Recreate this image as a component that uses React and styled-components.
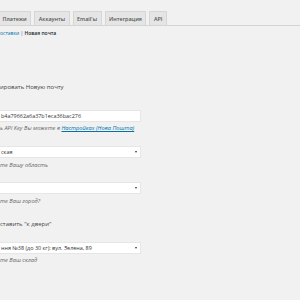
import React from "react";
import styled, { createGlobalStyle } from "styled-components";

const Global = createGlobalStyle`
  html, body { margin: 0; padding: 0; background: #f1f1f1; }
  body { font-family: "Open Sans", "Noto Sans", sans-serif; color: #444; }
`;

const Page = styled.div`
  width: 300px;
  height: 300px;
  overflow: hidden;
  padding-top: 11px;
  box-sizing: border-box;
`;

const TabBar = styled.nav`
  display: flex;
  gap: 3px;
  height: 14px;
  border-bottom: 1px solid #d4d4d4;
  margin-left: -2px;
`;

const Tab = styled.a`
  display: flex;
  align-items: center;
  height: 14px;
  box-sizing: border-box;
  padding: 0 3.5px;
  background: #e5e5e5;
  border: 1px solid #d6d6d6;
  border-bottom: none;
  font-size: 5.4px;
  font-weight: 600;
  color: #555;
  text-decoration: none;
  white-space: nowrap;
`;

const Crumbs = styled.div`
  margin-top: 3px;
  font-size: 5px;
  line-height: 8px;
  color: #555;
  white-space: nowrap;
`;

const CrumbLink = styled.a`
  color: #0073aa;
  text-decoration: none;
`;

const Current = styled.b`
  color: #23282d;
  font-weight: 600;
`;

const Label = styled.div`
  margin-top: ${p => p.$mt}px;
  font-size: 6px;
  line-height: 8px;
  color: #444;
  white-space: nowrap;
`;

const Field = styled.div`
  margin-top: ${p => p.$mt}px;
  width: 141px;
  height: 12px;
  box-sizing: border-box;
  background: #fff;
  border: 1px solid #e6e6e6;
  border-left: none;
  display: flex;
  align-items: center;
  padding-left: 1px;
  font-size: 5.45px;
  color: #333;
  white-space: nowrap;
  position: relative;
`;

const Arrow = styled.span`
  position: absolute;
  right: 3px;
  top: 50%;
  margin-top: -1px;
  width: 0;
  height: 0;
  border-left: 1.5px solid transparent;
  border-right: 1.5px solid transparent;
  border-top: 2px solid #333;
`;

const Desc = styled.div`
  margin-top: ${p => p.$mt}px;
  font-size: 5.7px;
  line-height: 8px;
  font-style: italic;
  color: #666;
  white-space: nowrap;
`;

const DescLink = styled.a`
  color: #0073aa;
  text-decoration: underline;
`;

export default function App() {
  return (
    <>
      <Global />
      <Page>
        <TabBar>
          <Tab>Платежи</Tab>
          <Tab>Аккаунты</Tab>
          <Tab>Email'ы</Tab>
          <Tab>Интеграция</Tab>
          <Tab>API</Tab>
        </TabBar>
        <Crumbs>
          <CrumbLink>оставки</CrumbLink> | <Current>Новая почта</Current>
        </Crumbs>
        <Label $mt={46}>ировать Новую почту</Label>
        <Field $mt={19}>b4a79662a6a37b1eca36bac276</Field>
        <Desc $mt={2}>
          ь API Key Вы можете в <DescLink>Настройках (Нова Пошта)</DescLink>
        </Desc>
        <Field $mt={14}>
          ская
          <Arrow />
        </Field>
        <Desc $mt={3}>те Вашу область</Desc>
        <Field $mt={13}>
          <Arrow />
        </Field>
        <Desc $mt={3}>те Ваш город?</Desc>
        <Label $mt={15}>ставить "к двери"</Label>
        <Field $mt={14}>
          ння №38 (до 30 кг): вул. Зелена, 89
          <Arrow />
        </Field>
        <Desc $mt={2}>те Ваш склад</Desc>
      </Page>
    </>
  );
}
